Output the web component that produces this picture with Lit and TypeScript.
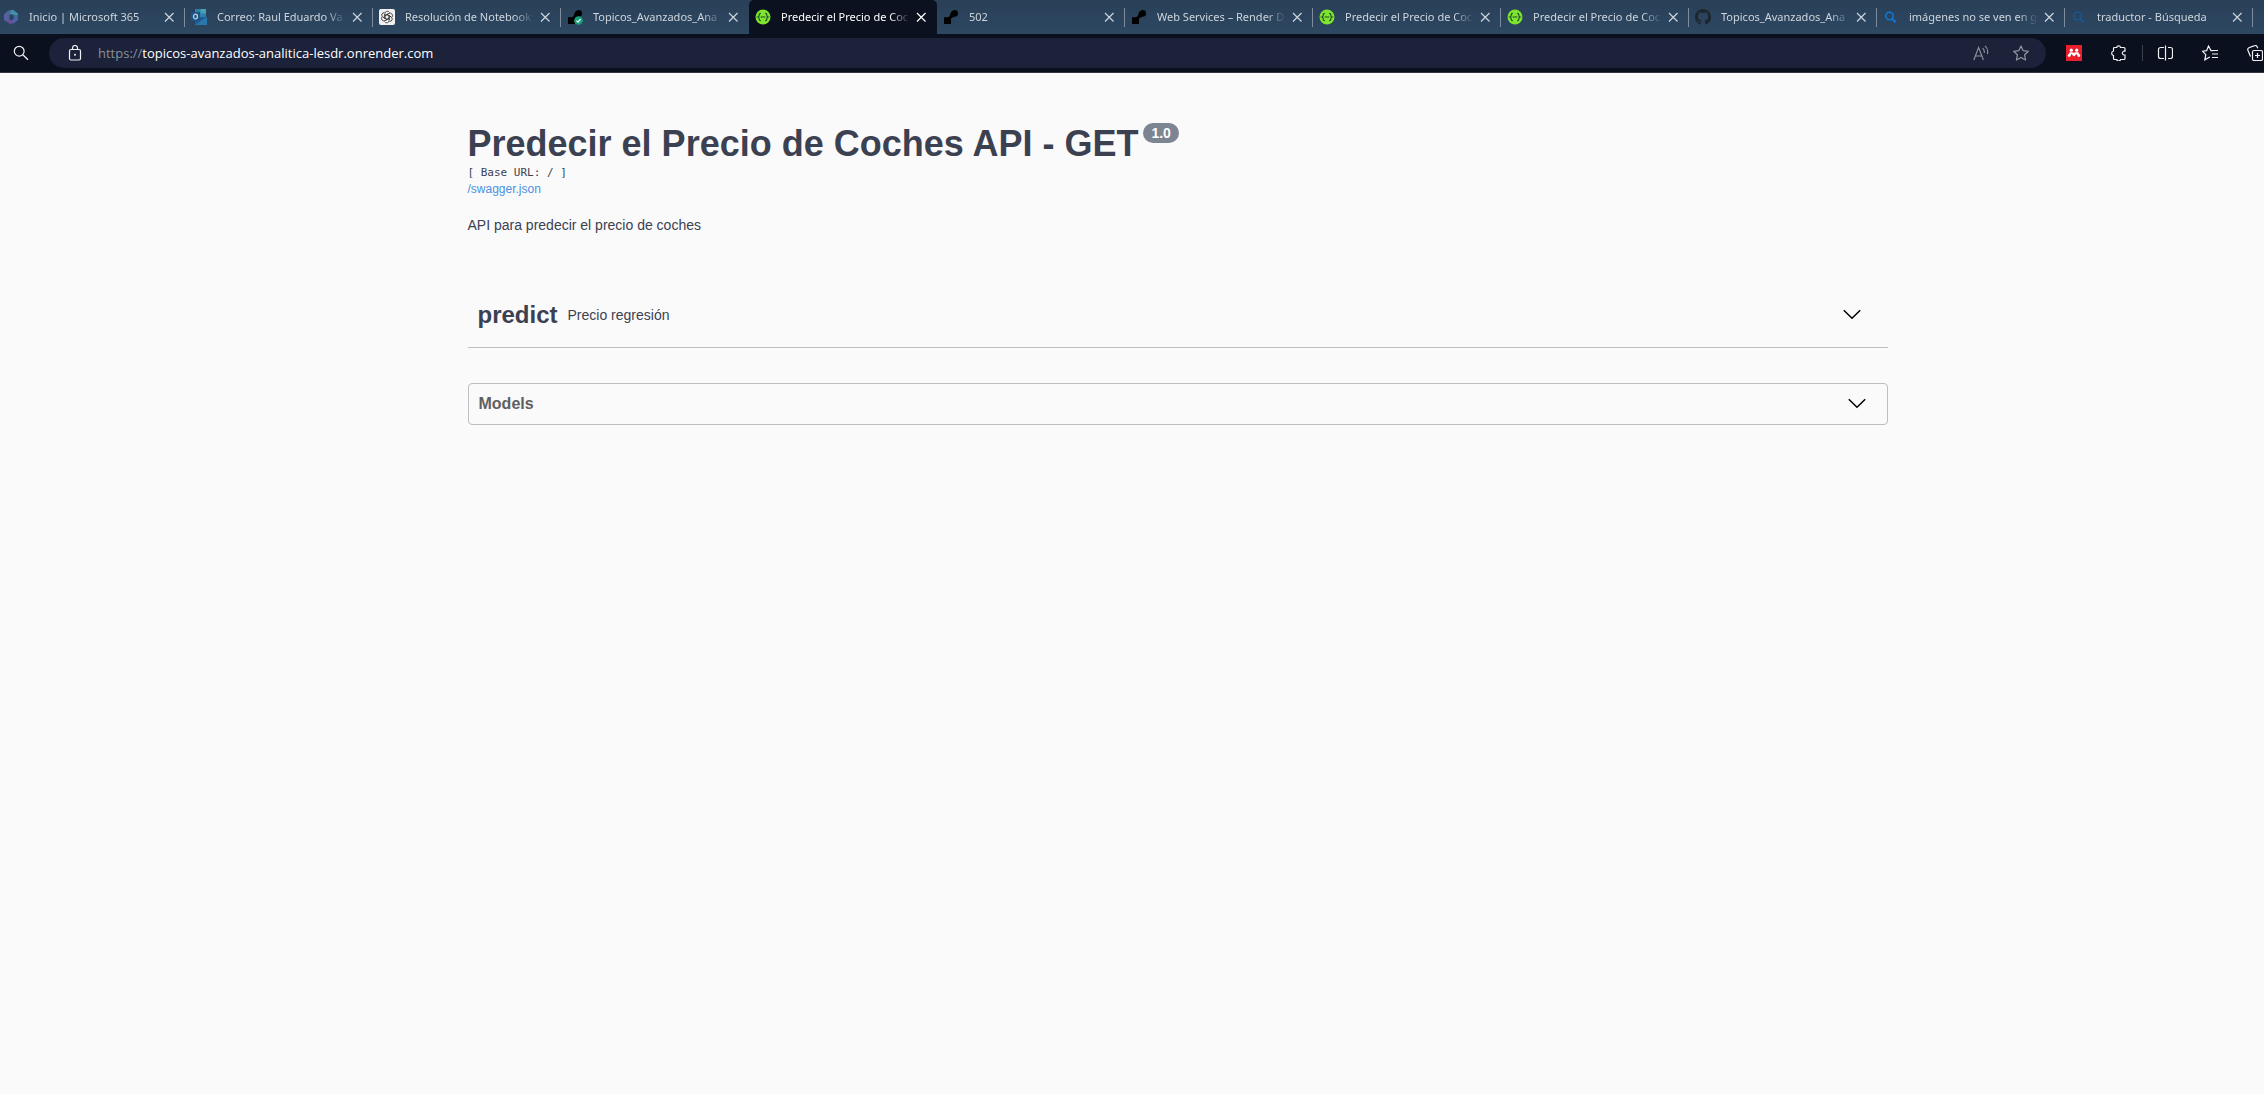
import { LitElement, html, css, svg } from "lit";
import { customElement, state } from "lit/decorators.js";
import { classMap } from "lit/directives/class-map.js";

const icon = (body: unknown, size = 16) =>
  html`<svg width=${size} height=${size} viewBox="0 0 16 16" fill="none" aria-hidden="true">${body}</svg>`;

const renderShape = svg`<path fill="#000" d="M1 8.200h3.200c1.500 0 2.400-.7 2.900-2.200C7.700 3.300 9 1 11.600 1a3.400 3.400 0 0 1 .1 6.800c-1.200 0-1.700.7-2.500 1-.9.400-1.200 1-1.200 2V15H1z"/>`;

const favicons: Record<string, unknown> = {
  m365: svg`
    <path fill="#56629f" d="M5.200 1.600 9 1.200 6.600 5.500v5L3.200 12.600 1 11V5.400z"/>
    <path fill="#3f90a8" d="M8 1h2.300L15 4.400v4L10.400 6 6.600 5.500z"/>
    <path fill="#4467a4" d="M15 6v5l-4.700 3.800L6 12.500 10.400 10V6z"/>
    <path fill="#6b4f9c" d="M1 10.400 3.200 12l3.400-1.600 1.600 1 2.200-1.200v2.600L7.600 15.400z"/>
    <path fill="#2b425b" d="M6.800 6.100 8.500 5.200l1.900 1v3.500L8.400 11l-1.600-.9z"/>`,
  outlook: svg`
    <path fill="#2f7fa8" d="M4 0h11v9H4z"/><path fill="#46a0b8" d="M9.500 0H15v4.500H9.500z"/>
    <path fill="#1e5d92" d="M4 8h12v8H4z"/><path fill="#2b76ab" d="m4 16 12-8v8z"/>
    <path fill="#1c5487" d="M0 3h9v9H0z"/>
    <ellipse cx="4.500" cy="7.500" rx="2" ry="2.300" stroke="#b9cfe0" stroke-width="1.300"/>`,
  gpt: svg`
    <rect width="16" height="16" rx="2" fill="#f1f1f1"/>
    <g stroke="#333" stroke-width=".8">
      ${[0, 60, 120, 180, 240, 300].map(
        (a) => svg`<path transform="rotate(${a} 8 8)" d="M5.800 9.200V4.600a2.500 2.500 0 0 1 4.700-1.100M7.900 5.600 11.600 7.700"/>`
      )}
    </g>`,
  render: renderShape,
  deployed: svg`${renderShape}
    <circle cx="11.500" cy="11.500" r="4.300" fill="#16a078"/>
    <path d="m9.500 11.600 1.500 1.500 2.600-3" stroke="#fff" stroke-width="1.300"/>`,
  swagger: svg`
    <circle cx="8" cy="8" r="7.500" fill="#7fe52c"/>
    <path d="M5.800 4.300c-1.300 0-1.600.5-1.600 1.500 0 1.200 0 1.900-1.100 2.200 1.100.3 1.100 1 1.100 2.200 0 1 .3 1.500 1.600 1.500M10.200 4.300c1.300 0 1.600.5 1.600 1.500 0 1.200 0 1.900 1.100 2.200-1.100.3-1.100 1-1.100 2.200 0 1-.3 1.500-1.600 1.500M5.600 8h4.800" stroke="#1d4a2e" stroke-width="1.200"/>`,
  github: svg`<path fill="#1f262e" fill-rule="evenodd" d="M8 0C3.580 0 0 3.580 0 8c0 3.540 2.290 6.530 5.470 7.590.4.070.55-.17.55-.38 0-.19-.01-.82-.01-1.490-2.010.37-2.530-.49-2.690-.94-.09-.23-.48-.94-.82-1.130-.28-.15-.68-.52-.01-.53.63-.01 1.080.58 1.230.82.720 1.210 1.870.87 2.330.66.070-.52.280-.87.510-1.070-1.780-.2-3.640-.89-3.640-3.950 0-.87.310-1.590.82-2.150-.08-.2-.36-1.020.080-2.120 0 0 .67-.21 2.200.82.640-.18 1.320-.27 2-.27s1.360.090 2 .27c1.530-1.040 2.200-.82 2.200-.82.440 1.100.160 1.920.080 2.120.510.560.82 1.270.82 2.150 0 3.070-1.870 3.750-3.650 3.950.290.250.540.730.540 1.480 0 1.070-.010 1.930-.010 2.200 0 .210.150.460.550.380A8.010 8.010 0 0 0 16 8c0-4.420-3.580-8-8-8z"/>`,
  bing: svg`<circle cx="6.500" cy="7" r="3.700" stroke="#1078d4" stroke-width="1.600"/><path d="m9.300 10 3.400 3.200" stroke="#1078d4" stroke-width="2"/>`,
  bingDim: svg`<circle cx="6.500" cy="7" r="3.700" stroke="#1c568c" stroke-width="1.600"/><path d="m9.300 10 3.400 3.200" stroke="#1c568c" stroke-width="2"/>`,
};

const closeIcon = svg`<path d="m4 4 8.500 8.500M12.500 4 4 12.500" stroke="currentColor" stroke-width="1.200"/>`;
const searchIcon = svg`<circle cx="6.200" cy="6.200" r="4.900" stroke="currentColor" stroke-width="1.200"/><path d="m9.800 9.800 5.200 5" stroke="currentColor" stroke-width="1.300"/>`;
const lockIcon = svg`<rect x="2.500" y="4.500" width="11" height="10.500" rx="1.500" stroke="currentColor" stroke-width="1.200"/><path d="M5.500 4.500V3a2.500 2.500 0 0 1 5 0v1.500" stroke="currentColor" stroke-width="1.200"/><circle cx="8" cy="9.700" r="1" fill="currentColor"/>`;
const readIcon = svg`<path d="M.8 15 5.600 2.500 10.400 15M2.400 11h6.400M9.600 3.200c1.400 1.200 2 2.800 1.600 4.800M12 .8c2.400 2 3.200 4.800 2.400 8.200" stroke="currentColor" stroke-width="1.100"/>`;
const starPath = "m8 1 2.200 4.700 5.200.6-3.800 3.500 1 5.200L8 12.400 3.400 15l1-5.200L.6 6.300l5.200-.6z";
const starIcon = svg`<path d=${starPath} stroke="currentColor" stroke-width="1.200" stroke-linejoin="round"/>`;
const mendeleyIcon = svg`<rect width="16" height="16" fill="#e9202c"/>
  <g fill="#fff">
    <circle cx="5.300" cy="5.200" r="1.600"/><circle cx="10.700" cy="5.200" r="1.600"/>
    <circle cx="3.200" cy="10.500" r="1.400"/><circle cx="12.800" cy="10.500" r="1.400"/><circle cx="8" cy="9.800" r="1.400"/>
    <path d="M3.600 7.200h3l1.400.9 1.400-.9h3l.9 3h-2.200l-.6-1.400-1.500 1.400H7L5.500 8.800l-.6 1.400H2.700z"/>
  </g>`;
const puzzleIcon = svg`<path d="M3.500 2.500h2.200a2 2 0 0 1 3.900 0h3.400a1 1 0 0 1 1 1v2.700h-1.300a2 2 0 0 0 0 3.800H14v3.500a1 1 0 0 1-1 1H9.600a2 2 0 0 1-3.900 0H3.500a1 1 0 0 1-1-1V10.500a2.300 2.300 0 0 1 0-4.500V3.500a1 1 0 0 1 1-1z" stroke="currentColor" stroke-width="1.200"/>`;
const splitIcon = svg`<path d="M7 2.500H3.500a2 2 0 0 0-2 2v7a2 2 0 0 0 2 2H7M11 2.500h2.500a2 2 0 0 1 2 2v7a2 2 0 0 1-2 2H11M8.500 .5v15" stroke="currentColor" stroke-width="1.200"/>`;
const favoritesIcon = svg`<path d="M13 5.500 9 5.600 6.500 1 4.600 5.700.5 6.200l3.300 3.500-1 5.100 5-2.800M10 5.500h6M10 9h6M10 12.500h6" stroke="currentColor" stroke-width="1.200"/>`;
const collectionsIcon = svg`<rect x="5.500" y="5.500" width="10" height="10" rx="1.500" stroke="currentColor" stroke-width="1.200"/><path d="M10.500 8v5M8 10.500h5M3.500 11.500.9 5.200a2 2 0 0 1 1-2.500L7.500.600a2 2 0 0 1 2.500.9l.7 1.700" stroke="currentColor" stroke-width="1.200"/>`;
const chevron = html`<svg class="chevron" width="20" height="20" viewBox="0 0 20 20" aria-hidden="true">
  <path d="m1.800 5.200 8.200 8 8.200-8" fill="none" stroke="#000" stroke-width="1.500"/></svg>`;

interface Tab { icon: string; title: string }

const TABS: Tab[] = [
  { icon: "m365", title: "Inicio | Microsoft 365" },
  { icon: "outlook", title: "Correo: Raul Eduardo Va" },
  { icon: "gpt", title: "Resolución de Notebook" },
  { icon: "deployed", title: "Topicos_Avanzados_Ana" },
  { icon: "swagger", title: "Predecir el Precio de Coc" },
  { icon: "render", title: "502" },
  { icon: "render", title: "Web Services – Render D" },
  { icon: "swagger", title: "Predecir el Precio de Coc" },
  { icon: "swagger", title: "Predecir el Precio de Coc" },
  { icon: "github", title: "Topicos_Avanzados_Ana" },
  { icon: "bing", title: "imágenes no se ven en g" },
  { icon: "bingDim", title: "traductor - Búsqueda" },
];

@customElement("browser-tabs")
class BrowserTabs extends LitElement {
  @state() private active = 4;

  static styles = css`
    :host { display: block; overflow: hidden; background: linear-gradient(#2a3f58, #2d4862); }
    .strip { display: flex; height: 34px; margin-left: -3px; }
    .tab {
      box-sizing: border-box; flex: none; width: 188px; display: flex; align-items: center;
      padding-right: 5px; position: relative; color: #ced5dc;
    }
    .tab::after {
      content: ""; position: absolute; right: 0; top: 8px; bottom: 7px; width: 1px; background: #7e8c9b;
    }
    .tab.active { background: #0b111f; color: #fff; border-radius: 5px 5px 0 0; }
    .tab.active::after, .tab.before-active::after { display: none; }
    button { font: inherit; color: inherit; background: none; border: 0; padding: 0; cursor: pointer; }
    .select {
      flex: 1; min-width: 0; height: 34px; display: flex; align-items: center; gap: 10px; padding-left: 6px;
      font: 11px/18px "Noto Sans", "Open Sans", sans-serif; text-align: left;
    }
    .select svg { flex: none; }
    .label {
      flex: 1; min-width: 0; overflow: hidden; white-space: nowrap;
      mask-image: linear-gradient(to left, transparent, #000 20px);
    }
    .close { width: 22px; height: 22px; display: grid; place-items: center; }
  `;

  render() {
    return html`<div class="strip">
      ${TABS.map(
        (t, i) => html`<div class=${classMap({ tab: true, active: i === this.active, "before-active": i === this.active - 1 })}>
          <button class="select" aria-pressed=${i === this.active} @click=${() => (this.active = i)}>
            ${icon(favicons[t.icon])}<span class="label">${t.title}</span>
          </button>
          <button class="close" aria-label="Cerrar">${icon(closeIcon)}</button>
        </div>`
      )}
    </div>`;
  }
}

@customElement("browser-toolbar")
class BrowserToolbar extends LitElement {
  static styles = css`
    :host { display: block; overflow: hidden; background: #0a101e; border-bottom: 1px solid #343744; color: #f0f1f4; }
    .bar { display: flex; align-items: center; height: 38px; margin-right: -14px; }
    button {
      flex: none; height: 30px; padding: 0; border: 0; background: none; color: inherit;
      display: grid; place-items: center; cursor: pointer;
    }
    .search { width: 42px; }
    .address {
      flex: 1; min-width: 0; display: flex; align-items: center; height: 30px; margin: 0 6px 0 7px;
      padding: 0 5px 0 10px; box-sizing: border-box; border-radius: 15px; background: #1b223a;
      font: 13px/20px "Open Sans", "Noto Sans", sans-serif;
    }
    .lock { width: 32px; margin-right: 7px; }
    label { color: #8b8e99; }
    input {
      flex: 1; min-width: 0; border: 0; padding: 0; background: none; color: #fff; font: inherit; outline: none;
    }
    .inner { width: 40px; color: #93969f; }
    .action { box-sizing: border-box; width: 45px; padding-left: 14px; justify-items: start; }
    .divider { flex: none; width: 1px; height: 16px; background: #3c4150; }
  `;

  render() {
    return html`<div class="bar">
      <button class="search" aria-label="Buscar">${icon(searchIcon)}</button>
      <div class="address">
        <button class="lock" aria-label="Información del sitio">${icon(lockIcon)}</button>
        <label for="url">https://</label>
        <input id="url" type="text" spellcheck="false" .value=${"topicos-avanzados-analitica-lesdr.onrender.com"} />
        <button class="inner" aria-label="Leer en voz alta">${icon(readIcon)}</button>
        <button class="inner" aria-label="Agregar a favoritos">${icon(starIcon)}</button>
      </div>
      <button class="action" aria-label="Mendeley">${icon(mendeleyIcon)}</button>
      <button class="action" aria-label="Extensiones">${icon(puzzleIcon)}</button>
      <span class="divider"></span>
      <button class="action" aria-label="Pantalla dividida">${icon(splitIcon)}</button>
      <button class="action" aria-label="Favoritos">${icon(favoritesIcon)}</button>
      <button class="action" aria-label="Colecciones">${icon(collectionsIcon)}</button>
    </div>`;
  }
}

@customElement("api-docs")
class ApiDocs extends LitElement {
  @state() private tagOpen = false;
  @state() private modelsOpen = false;

  static styles = css`
    :host {
      display: block; padding-left: 91px; color: #3b4151; font-family: "Liberation Sans", Arial, sans-serif;
    }
    .wrapper { max-width: 1460px; margin: 0 auto; padding: 50px 20px; box-sizing: border-box; }
    .heading { display: flex; align-items: flex-start; gap: 5px; }
    h1 { margin: 0; font-size: 36px; line-height: 41px; font-weight: 700; }
    .version {
      padding: 2px 8px; border-radius: 10px; background: #7d8492; color: #fff;
      font-size: 14px; line-height: 16px; font-weight: 700;
    }
    .base { margin: 0; font: 11px/17px "DejaVu Sans Mono", monospace; }
    .spec { display: block; font-size: 12px; line-height: 16px; color: #4990e2; text-decoration: none; }
    .about { margin: 18px 0 47px; font-size: 14px; line-height: 20px; }
    h2, h3 { margin: 0; }
    .toggle {
      box-sizing: border-box; width: 100%; display: flex; align-items: center; background: none;
      font-family: inherit; color: inherit; text-align: left; cursor: pointer;
    }
    .tag { height: 66px; border: 0; border-bottom: 1px solid #bdbfc4; padding: 0 26px 0 10px; gap: 10px; }
    .name { font-size: 24px; line-height: 28px; font-weight: 700; }
    .note { flex: 1; font-size: 14px; line-height: 20px; font-weight: 400; }
    .models { margin-top: 35px; border: 1px solid #bdbfc4; border-radius: 4px; }
    .models .toggle { height: 40px; border: 0; padding: 0 20px 0 10px; color: #606060; }
    .models .name { flex: 1; font-size: 16px; line-height: 20px; }
    .chevron { flex: none; }
    .open .chevron { transform: rotate(180deg); }
  `;

  render() {
    return html`<main class="wrapper">
      <div class="heading"><h1>Predecir el Precio de Coches API - GET</h1><span class="version">1.0</span></div>
      <pre class="base">[ Base URL: / ]</pre>
      <a class="spec" href="/swagger.json">/swagger.json</a>
      <p class="about">API para predecir el precio de coches</p>
      <h2>
        <button class=${classMap({ toggle: true, tag: true, open: this.tagOpen })} aria-expanded=${this.tagOpen}
          @click=${() => (this.tagOpen = !this.tagOpen)}>
          <span class="name">predict</span><span class="note">Precio regresión</span>${chevron}
        </button>
      </h2>
      <section class="models">
        <h3>
          <button class=${classMap({ toggle: true, open: this.modelsOpen })} aria-expanded=${this.modelsOpen}
            @click=${() => (this.modelsOpen = !this.modelsOpen)}>
            <span class="name">Models</span>${chevron}
          </button>
        </h3>
      </section>
    </main>`;
  }
}

@customElement("app-root")
class AppRoot extends LitElement {
  static styles = css`
    :host { display: block; min-height: 100vh; background: #fafafa; }
  `;

  render() {
    return html`<browser-tabs></browser-tabs><browser-toolbar></browser-toolbar><api-docs></api-docs>`;
  }
}
